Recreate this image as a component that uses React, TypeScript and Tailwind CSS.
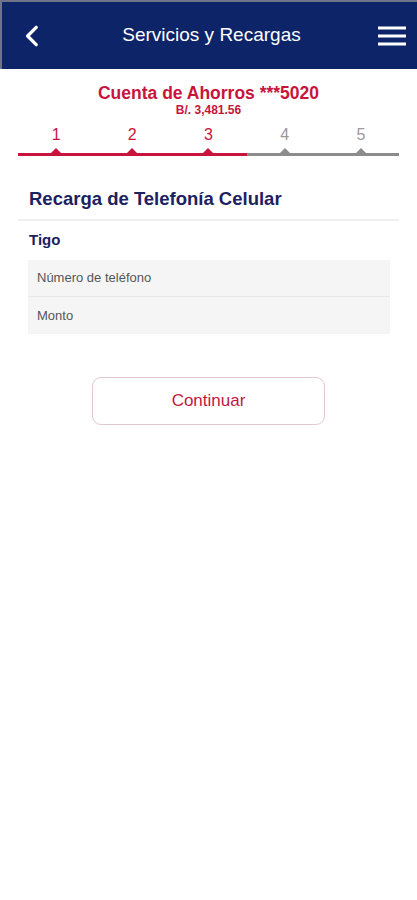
import React from 'react';

const steps = [1, 2, 3, 4, 5];
const current = 3;

const Header = () => (
  <div className="flex h-[69px] items-center justify-between border-l-2 border-t-2 border-[#6e7388] bg-[#0e2468] pl-[18px] pr-[10px]">
    <svg viewBox="0 0 24 24" className="h-[26px] w-[26px]" fill="none" stroke="white" strokeWidth="3" strokeLinecap="round" strokeLinejoin="round">
      <path d="M15 4l-8 8 8 8" />
    </svg>
    <h1 className="text-[19px] text-white">Servicios y Recargas</h1>
    <svg viewBox="0 0 30 24" className="h-[24px] w-[30px]" fill="none" stroke="white" strokeWidth="3.2">
      <path d="M1 4h28M1 12h28M1 20h28" />
    </svg>
  </div>
);

const Stepper = () => (
  <div className="mx-[18px] mt-[9px]">
    <div className="grid grid-cols-5">
      {steps.map((s) => (
        <div
          key={s}
          className={`text-center text-[16px] leading-[20px] ${s <= current ? 'text-[#c8143c]' : 'text-[#9a9a9a]'}`}
        >
          {s}
        </div>
      ))}
    </div>
    <div className="grid grid-cols-5 pt-[3px]">
      {steps.map((s) => (
        <div key={s} className="relative flex flex-col items-center">
          <div
            className={`h-0 w-0 border-x-[5px] border-b-[5px] border-x-transparent ${s <= current ? 'border-b-[#c8143c]' : 'border-b-[#8c8c8c]'}`}
          />
          <div className={`h-[3px] w-full ${s <= current ? 'bg-[#c8143c]' : 'bg-[#8c8c8c]'}`} />
        </div>
      ))}
    </div>
  </div>
);

export default function App() {
  return (
    <div className="min-h-[900px] bg-white font-['Liberation_Sans',Arial,sans-serif]">
      <Header />
      <div className="pt-[14px] text-center">
        <div className="text-[17.5px] font-bold leading-[20px] text-[#c8143c]">Cuenta de Ahorros ***5020</div>
        <div className="text-[12px] font-bold leading-[14px] text-[#c8143c]">B/. 3,481.56</div>
      </div>
      <div className="-mt-px">
        <Stepper />
      </div>
      <div className="mx-[18px] mt-[32px] border-b-2 border-[#f0f0f0] pb-[9px] pl-[11px]">
        <h2 className="text-[18.5px] font-bold leading-[22px] text-[#1c2160]">Recarga de Telefonía Celular</h2>
      </div>
      <div className="mx-[28px] mt-[9px]">
        <div className="pl-[1px] text-[15px] font-bold leading-[20px] text-[#1c2160]">Tigo</div>
        <div className="mt-[10px] mr-[-1px] bg-[#f5f5f5] text-[13px] text-[#555]">
          <div className="flex h-[37px] items-center border-b border-[#e8e8e8] px-[9px]">Número de teléfono</div>
          <div className="flex h-[37px] items-center px-[9px]">Monto</div>
        </div>
      </div>
      <div className="mt-[43px] flex justify-center">
        <button className="h-[48px] w-[233px] rounded-[9px] border border-[#e2c9cf] bg-white text-[17px] text-[#c0173f]">
          Continuar
        </button>
      </div>
    </div>
  );
}
